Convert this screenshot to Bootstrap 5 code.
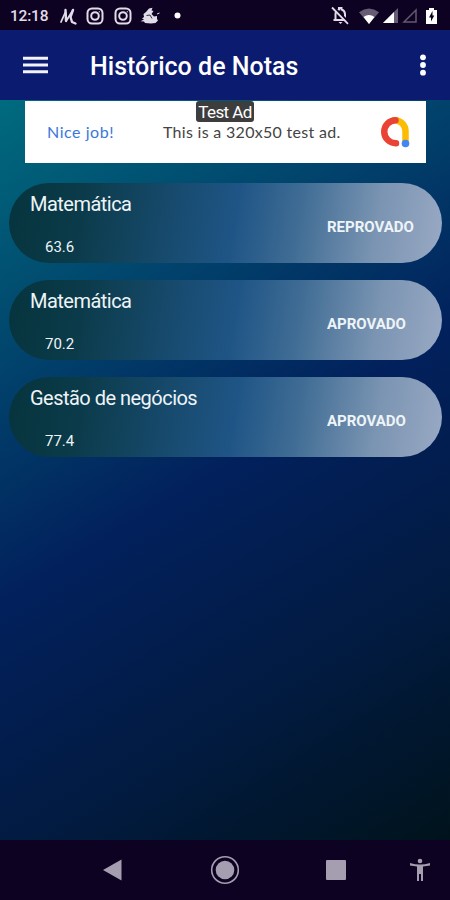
<!DOCTYPE html>
<html lang="pt-BR">
<head>
<meta charset="utf-8">
<meta name="viewport" content="width=device-width, initial-scale=1">
<title>Histórico de Notas</title>
<link rel="stylesheet" href="https://cdn.jsdelivr.net/npm/bootstrap@5.3.0/dist/css/bootstrap.min.css">
<style>
body { font-family: Roboto, sans-serif; background: #0d0221; }
svg { display: block; flex: none; }
.phone { height: 900px; }
.status { height: 30px; background: #0d0221; padding: 0 13px 0 10px; color: #e0dce8; }
.status svg { position: relative; top: .5px; }
.clock { font-size: 15.5px; font-weight: 500; width: 50px; line-height: 27px; letter-spacing: -.2px; padding-top: 3px; }
.gap-icon { margin-left: 10px; }
.gap-wifi { margin-left: 9px; }
.gap-dot { margin-left: 13px; }
.appbar { height: 70px; background: #0b1b70; padding: 0 17px 0 23px; --bs-navbar-padding-y: 0; }
.app-title { font-size: 25px; font-weight: 500; line-height: 70px; margin-left: 42px; letter-spacing: .02px; padding-top: 3px; }
.screen { background: linear-gradient(148.7deg, #006b7e 0%, #02205c 50%, #021b42 74%, #00131c 100%); padding: 1px 8px 0 9px; }
.ad { width: 401px; height: 62px; margin-left: 16px; font-family: Lato, sans-serif; font-size: 16px; padding-left: 22px; padding-right: 15px; }
.ad-link { color: #3a78d8; width: 116px; letter-spacing: .55px; }
.ad-text { color: #444; width: 215px; letter-spacing: .3px; }
.ad-tag { top: 0; left: 171px; width: 58px; height: 21px; background: #3d3d3d; border-radius: 3px; font: 17px/22px Roboto, sans-serif; letter-spacing: -.6px; }
.grades { margin-top: 20px; gap: 17px; }
.grade { height: 80px; border-radius: 40px; padding: 0 0 0 21px; color: #eef4f8;
  background: linear-gradient(99deg, #06343d 0%, #0b3b4a 17%, #1f5586 52%, #3f6c94 66%, #7a94b2 84%, #99a9c4 100%); }
.subject { font-size: 20px; line-height: 24px; margin-top: 9px; letter-spacing: -.52px; }
.score { font-size: 15px; line-height: 18px; margin: 22px 0 0 15px; }
.result { font-size: 15px; font-weight: 700; width: 115px; padding-top: 8px; }
.sysnav { height: 60px; background: #0d0221; color: #a59db0; padding: 0 19px 0 103px; }
.nav-home { margin-left: 87px; }
.nav-recent { margin-left: 86px; }
</style>
<script src="https://cdn.jsdelivr.net/npm/bootstrap@5.3.0/dist/js/bootstrap.bundle.min.js"></script>
</head>
<body>
<div class="phone d-flex flex-column overflow-hidden">
  <div class="status d-flex align-items-center">
    <span class="clock">12:18</span>
    <svg width="18" height="20" viewBox="0 0 18 20" fill="none" stroke="currentColor" stroke-linecap="round" stroke-linejoin="round"><path stroke-width="1.800" d="M1 16 5.500 6 6.500 14.500 13 4"/><path stroke-width="2.400" d="M5.500 4 6 15M13 4 10.500 11 12 16 15.500 17.500"/></svg>
    <svg class="ms-2" width="18" height="18" viewBox="0 0 18 18" fill="none" stroke="currentColor" stroke-width="2"><rect x="1.500" y="1.500" width="15" height="15" rx="4.500"/><circle cx="9" cy="9" r="3.800"/><circle cx="13.300" cy="4.800" r=".3" stroke-width="1"/></svg>
    <svg class="gap-icon" width="18" height="18" viewBox="0 0 18 18" fill="none" stroke="currentColor" stroke-width="2"><rect x="1.500" y="1.500" width="15" height="15" rx="4.500"/><circle cx="9" cy="9" r="3.800"/><circle cx="13.300" cy="4.800" r=".3" stroke-width="1"/></svg>
    <svg class="ms-2" width="21" height="18" viewBox="0 0 21 18" fill="currentColor"><path d="M3.500 7 6 5 9 1.500 12.500 .8 11.500 3.500 13.500 4 11.500 7 14 9.500 17 9 17 12 18 13.500 15.500 16 11 16.500 5 16 4 14.500 .5 14.200 4 12.500 2 11.500 4 10Z"/><path d="M6.500 8.500 10 8 12 11.500" stroke="#0d0221" stroke-width=".8" fill="none"/><path d="M17 7 19.500 6" stroke="currentColor"/></svg>
    <svg class="gap-dot" width="7" height="7" viewBox="0 0 7 7" fill="#fff"><circle cx="3.500" cy="3.500" r="3"/></svg>
    <svg class="ms-auto" width="19" height="19" viewBox="0 0 19 19"><path d="M4.500 13.500V8a5 5 0 0 1 3.500-4.500V2h2.500v1.500A5 5 0 0 1 14 8v5.500M2.500 14H16" fill="none" stroke="currentColor" stroke-width="2"/><path d="M7.500 16h4L9.500 18Z" fill="currentColor"/><path d="M2.500 .8 18.500 17" stroke="#0d0221" stroke-width="2"/><path d="M1 1.500 17 17.800" stroke="currentColor" stroke-width="1.800"/></svg>
    <svg class="gap-wifi" width="20" height="16" viewBox="0 0 20 16"><path d="M0 4.200Q10-3 20 4.200L10 16Z" fill="#665d75"/><path d="M4.500 9Q10 5 15.500 9L10 16Z" fill="#fff"/></svg>
    <svg class="ms-1" width="15" height="15" viewBox="0 0 15 15"><path d="M15 0V15H0Z" fill="#665d75"/><path d="M11 4V15H0Z" fill="#fff"/></svg>
    <svg class="ms-1" width="15" height="15" viewBox="0 0 15 15"><path d="M14 2V14H2Z" fill="none" stroke="#625970" stroke-width="1.500"/></svg>
    <svg class="gap-wifi" width="11" height="16" viewBox="0 0 11 16"><path d="M3 0H8V2H11V16H0V2H3Z" fill="#fff"/><path d="M6.500 3 3 9.500H5V13.500L8.300 7.500H6.500Z" fill="#0d0221"/></svg>
  </div>
  <nav class="appbar navbar flex-nowrap text-white">
    <svg width="25" height="18" viewBox="0 0 25 18" fill="#f2f3fb"><path d="M0 .7H25V3.700H0ZM0 7.500H25V10.500H0ZM0 14.200H25V17.200H0Z"/></svg>
    <div class="app-title me-auto text-nowrap">Histórico de Notas</div>
    <svg width="20" height="22" viewBox="0 0 20 22" fill="#fff"><circle cx="10" cy="3.300" r="2.900"/><circle cx="10" cy="11" r="2.900"/><circle cx="10" cy="18.700" r="2.900"/></svg>
  </nav>
  <main class="screen flex-grow-1">
    <div class="ad bg-white d-flex align-items-center position-relative text-nowrap">
      <span class="ad-link">Nice job!</span>
      <span class="ad-text">This is a 320x50 test ad.</span>
      <svg width="32" height="32" viewBox="0 0 32 32" fill="none" stroke-width="6.500" stroke-linecap="round"><path d="M17 4.200A11 11 0 0 1 27.500 15V27" stroke="#fbbc04"/><path d="M17.500 4.200A11.500 11.500 0 1 0 18 27.200" stroke="#ea4335"/><circle cx="27.500" cy="27.500" r="3.800" fill="#4285f4"/></svg>
      <span class="ad-tag position-absolute text-white text-center">Test Ad</span>
    </div>
    <div class="grades d-flex flex-column">
      <div class="grade d-flex justify-content-between">
        <div><div class="subject">Matemática</div><div class="score">63.6</div></div>
        <div class="result align-self-center">REPROVADO</div>
      </div>
      <div class="grade d-flex justify-content-between">
        <div><div class="subject">Matemática</div><div class="score">70.2</div></div>
        <div class="result align-self-center">APROVADO</div>
      </div>
      <div class="grade d-flex justify-content-between">
        <div><div class="subject">Gestão de negócios</div><div class="score">77.4</div></div>
        <div class="result align-self-center">APROVADO</div>
      </div>
    </div>
  </main>
  <div class="sysnav d-flex align-items-center">
    <svg width="20" height="22" viewBox="0 0 20 22" fill="currentColor"><path d="M0 11 18.500 .5V21.500Z"/></svg>
    <svg class="nav-home" width="30" height="30" viewBox="0 0 30 30"><circle cx="15" cy="15" r="13.300" fill="none" stroke="currentColor" stroke-width="1.600"/><circle cx="15" cy="15" r="9.300" fill="currentColor"/></svg>
    <svg class="nav-recent" width="20" height="20" viewBox="0 0 20 20" fill="currentColor"><rect width="20" height="20" rx="1"/></svg>
    <svg class="ms-auto" width="22" height="24" viewBox="0 0 22 24" fill="currentColor"><circle cx="11" cy="3" r="2.300"/><path d="M1 5Q11 8 21 5V7.400L14 8.600V23H12V16H10V23H8V8.600L1 7.400Z"/></svg>
  </div>
</div>
</body>
</html>
